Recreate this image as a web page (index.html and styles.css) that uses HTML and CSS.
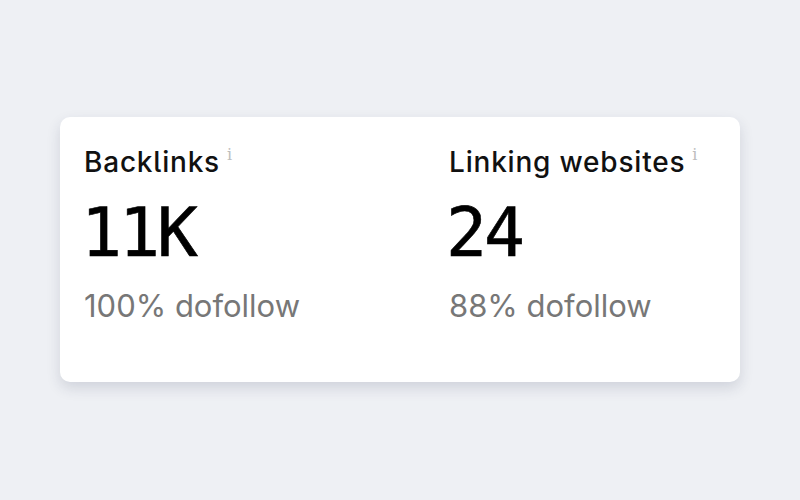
FILE: index.html
```html
<!DOCTYPE html>
<html>
<head>
<meta charset="utf-8">
<link rel="stylesheet" href="styles.css">
</head>
<body>
<div class="card">
  <div class="stat">
    <div class="label">Backlinks<span class="info">i</span></div>
    <div class="value">11K</div>
    <div class="sub">100% dofollow</div>
  </div>
  <div class="stat">
    <div class="label">Linking websites<span class="info">i</span></div>
    <div class="value">24</div>
    <div class="sub">88% dofollow</div>
  </div>
</div>
</body>
</html>
```
FILE: styles.css
```css
html, body {
  margin: 0;
  padding: 0;
}
body {
  width: 800px;
  height: 500px;
  background: #eef0f4;
  font-family: Inter, "Noto Sans", sans-serif;
  display: flex;
  align-items: flex-start;
  justify-content: center;
}
.card {
  margin-top: 117px;
  width: 680px;
  height: 265px;
  box-sizing: border-box;
  background: #fff;
  border-radius: 10px;
  box-shadow: 0 6px 14px rgba(40, 50, 80, 0.15);
  padding: 29px 24px;
  display: grid;
  grid-template-columns: 365px 1fr;
}
.stat {
  display: flex;
  flex-direction: column;
}
.label {
  font-size: 28px;
  line-height: 32px;
  letter-spacing: 0.8px;
  color: #111;
  font-weight: 500;
  font-feature-settings: "cv05";
}
.info {
  font-family: "DejaVu Serif", serif;
  font-size: 16px;
  line-height: 16px;
  color: #bdbdbd;
  vertical-align: top;
  margin-left: 7px;
  position: relative;
  top: 1px;
}
.value {
  margin-top: 15px;
  margin-left: -3px;
  font-family: "DejaVu Sans Mono", monospace;
  font-size: 68px;
  line-height: 80px;
  letter-spacing: -3px;
  color: #000;
  font-weight: 400;
  -webkit-text-stroke: 0.6px #000;
}
.sub {
  margin-top: 15px;
  font-size: 31px;
  line-height: 36px;
  color: #777;
}
```
